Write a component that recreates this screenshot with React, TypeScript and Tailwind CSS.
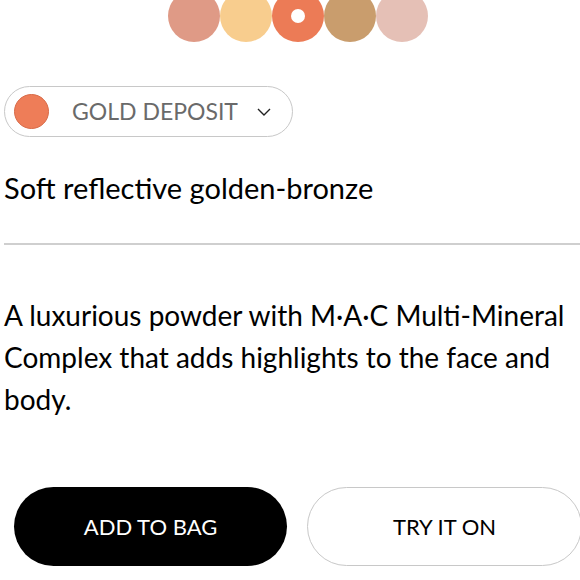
const swatches = ["#df9a86", "#f8cd8e", "#ec7b56", "#c99d6d", "#e5c0b6"];

const Swatches = () => (
  <div className="flex h-[42px] justify-center">
    {swatches.map((c, i) => (
      <div
        key={c}
        className="-mt-[10px] flex h-[52px] w-[52px] items-center justify-center rounded-full"
        style={{ backgroundColor: c }}
      >
        {i === 2 && <div className="h-[14px] w-[14px] rounded-full bg-white" />}
      </div>
    ))}
  </div>
);

export default function App() {
  return (
    <div className="h-[580px] w-[580px] overflow-hidden bg-white font-['Lato',sans-serif] text-black">
      <div className="ml-1 w-[588px]">
        <Swatches />

        <button className="mt-[44px] flex h-[51px] w-[289px] items-center rounded-full border border-[#c8c8c8] pl-[9px] pr-[21px]">
          <span className="h-[35px] w-[35px] rounded-full border border-[#d86a47] bg-[#ee7d58]" />
          <span className="ml-[23px] text-[23px] text-[#6a6a6a]">GOLD DEPOSIT</span>
          <svg className="ml-auto h-[8px] w-[14px]" viewBox="0 0 14 8" fill="none">
            <polyline points="1,1 7,7 13,1" stroke="#222" strokeWidth="1.4" />
          </svg>
        </button>

        <p className="mt-[32px] text-[29px] leading-[38px]">Soft reflective golden-bronze</p>

        <div className="mt-[36px] h-[2px] w-full bg-[#cfcfcf]" />

        <p className="mt-[49px] text-[28px] leading-[42px]">
          A luxurious powder with M·A·C Multi-Mineral Complex that adds highlights to the face and body.
        </p>

        <div className="mt-[67px] flex gap-5 px-[10px]">
          <button className="flex h-[79px] flex-1 items-center justify-center rounded-full bg-black text-[22px] text-white">
            ADD TO BAG
          </button>
          <button className="flex h-[79px] flex-1 items-center justify-center rounded-full border border-[#c8c8c8] bg-white text-[22px] text-black">
            TRY IT ON
          </button>
        </div>
      </div>
    </div>
  );
}
